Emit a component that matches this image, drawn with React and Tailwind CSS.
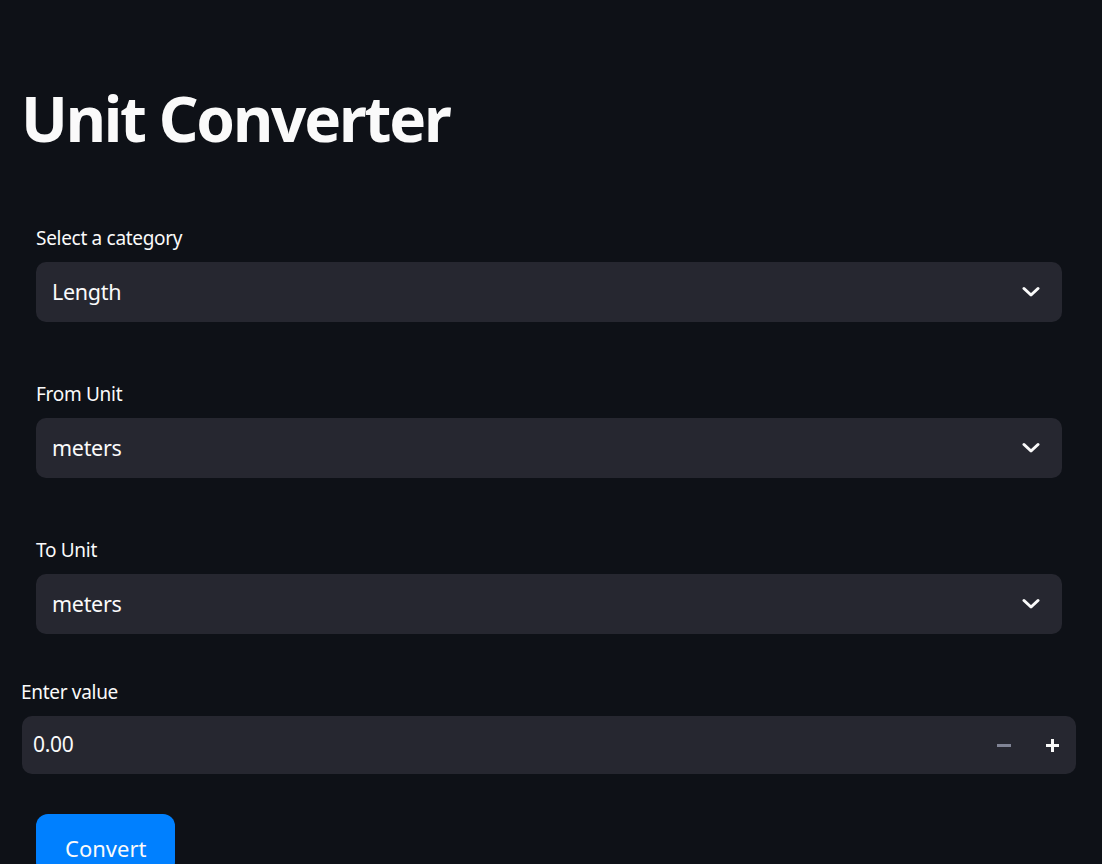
function Etiqueta({ children, className = "" }) {
  return (
    <p className={`text-[19px] leading-[28px] tracking-[-0.3px] text-[#fafafa] ${className}`}>
      {children}
    </p>
  );
}

function Chevron() {
  return (
    <svg width="18" height="12" viewBox="0 0 18 12" fill="none">
      <path d="M2 2.5 L9 9 L16 2.5" stroke="#fafafa" strokeWidth="3" strokeLinecap="round" strokeLinejoin="round" />
    </svg>
  );
}

function Selector({ etiqueta, valor }) {
  return (
    <div className="pl-[36px] pr-[40px]">
      <Etiqueta className="mb-[10px]">{etiqueta}</Etiqueta>
      <div className="flex h-[60px] items-center justify-between rounded-[10px] bg-[#262730] pl-[16px] pr-[22px]">
        <span className="text-[21.5px] tracking-[-0.3px] text-[#fafafa]">{valor}</span>
        <Chevron />
      </div>
    </div>
  );
}

export default function App() {
  return (
    <div
      className="h-[864px] overflow-hidden bg-[#0e1117] text-[#fafafa]"
      style={{ fontFamily: '"Noto Sans", sans-serif' }}
    >
      <h1 className="pl-[21px] pt-[76px] text-[62px] font-bold leading-[84px] tracking-[-2.2px]">
        Unit Converter
      </h1>

      <div className="mt-[64px] space-y-[58px]">
        <Selector etiqueta="Select a category" valor="Length" />
        <Selector etiqueta="From Unit" valor="meters" />
        <Selector etiqueta="To Unit" valor="meters" />
      </div>

      <div className="mt-[44px] pl-[22px] pr-[26px]">
        <Etiqueta className="mb-[10px] -ml-[1px]">Enter value</Etiqueta>
        <div className="flex h-[58px] items-center rounded-[10px] bg-[#262730] pl-[11px]">
          <span className="flex-1 text-[21px] tracking-[-0.3px] text-[#fafafa]">0.00</span>
          <button className="flex h-full w-[48px] items-center justify-center">
            <span className="block h-[3px] w-[14px] bg-[#808495]" />
          </button>
          <button className="relative flex h-full w-[48px] items-center justify-center">
            <span className="block h-[3px] w-[13px] bg-[#fafafa]" />
            <span className="absolute block h-[13px] w-[3px] bg-[#fafafa]" />
          </button>
        </div>
      </div>

      <div className="mt-[40px] px-[36px]">
        <button className="h-[60px] rounded-[12px] bg-[#0080ff] px-[29px] pt-[8px] text-[22px] text-[#fafafa]">
          Convert
        </button>
      </div>
    </div>
  );
}
